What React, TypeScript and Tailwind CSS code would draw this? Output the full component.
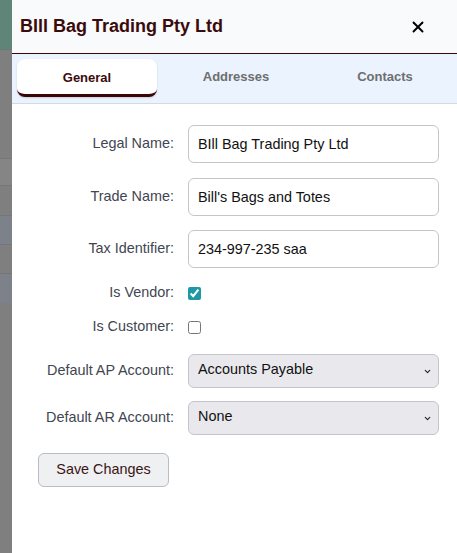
import { X, ChevronDown } from "lucide-react";

const font = { fontFamily: '"Liberation Sans", Arial, sans-serif' };

function Backdrop() {
  return (
    <div className="flex w-[12px] shrink-0 flex-col bg-[#7f7f7f]">
      <div className="h-[50px] border-b border-[#667a73] bg-[#5f8478]" />
      <div className="h-[109px] border-b border-[#767676]" />
      <div className="h-[27px] border-b border-[#767676] bg-[#858585]" />
      <div className="h-[30px] border-b border-[#767676]" />
      <div className="h-[29px] border-b border-[#767676] bg-[#7d818a]" />
      <div className="h-[29px] border-b border-[#767676]" />
      <div className="h-[29px] bg-[#7d818a]" />
    </div>
  );
}

const labelCls = "w-[176px] shrink-0 pr-[14px] text-right text-[14.4px] text-[#3f4651]";

function TextRow({ label, value, className }: { label: string; value: string; className?: string }) {
  return (
    <div className={`flex items-center ${className ?? ""}`}>
      <label className={labelCls}>{label}</label>
      <input
        defaultValue={value}
        className="h-[38px] w-[251px] rounded-[6px] border border-[#c2c6cc] bg-white px-[9px] text-[14.4px] text-[#111] outline-none"
      />
    </div>
  );
}

function CheckRow({ label, checked, className }: { label: string; checked: boolean; className?: string }) {
  return (
    <div className={`flex h-[20px] items-center ${className ?? ""}`}>
      <label className={labelCls}>{label}</label>
      <input
        type="checkbox"
        defaultChecked={checked}
        className="m-0 h-[13px] w-[13px] accent-[#1e97a6]"
      />
    </div>
  );
}

function SelectRow({ label, value, className }: { label: string; value: string; className?: string }) {
  return (
    <div className={`flex items-center ${className ?? ""}`}>
      <label className={labelCls}>{label}</label>
      <div className="relative w-[251px]">
        <select
          defaultValue={value}
          className="h-[34px] w-full appearance-none rounded-[6px] border border-[#c2c6cc] bg-[#e9e9ed] px-[9px] pb-[2px] text-[14.4px] text-[#111] outline-none"
        >
          <option>{value}</option>
        </select>
        <ChevronDown
          size={9}
          strokeWidth={3}
          className="pointer-events-none absolute right-[7px] top-[13px] text-[#222]"
        />
      </div>
    </div>
  );
}

export default function App() {
  const tabs = ["General", "Addresses", "Contacts"];
  const active = "General";

  return (
    <div className="flex h-[553px] w-[457px] overflow-hidden" style={font}>
      <Backdrop />
      <div className="flex flex-1 flex-col bg-white">
        <header className="flex h-[54px] shrink-0 items-center justify-between border-b border-[#3b0606] bg-[#f8fafc] pl-[8px] pr-[30px]">
          <h1 className="text-[18px] font-bold text-[#3b0b0b]">BIll Bag Trading Pty Ltd</h1>
          <X size={18} strokeWidth={2.5} className="text-black" />
        </header>

        <nav className="flex h-[50px] shrink-0 gap-[9px] border-b border-[#d3dae2] bg-[#eaf3fe] pl-[5px] pt-[5px]">
          {tabs.map((tab) => (
            <div
              key={tab}
              className={`flex h-[38px] w-[140px] items-center justify-center text-[13px] font-bold ${
                tab === active
                  ? "rounded-[8px] border-b-[3px] border-[#3b0505] bg-white pt-[2px] text-[#3b0b0b] shadow-[0_1px_2px_rgba(0,0,0,0.15)]"
                  : "pb-[2px] text-[#6e6e6e]"
              }`}
            >
              {tab}
            </div>
          ))}
        </nav>

        <form className="flex flex-col pt-[21px]">
          <TextRow label="Legal Name:" value="BIll Bag Trading Pty Ltd" />
          <TextRow label="Trade Name:" value="Bill's Bags and Totes" className="mt-[15px]" />
          <TextRow label="Tax Identifier:" value="234-997-235 saa" className="mt-[14px]" />
          <CheckRow label="Is Vendor:" checked className="mt-[15px]" />
          <CheckRow label="Is Customer:" checked={false} className="mt-[14px]" />
          <SelectRow label="Default AP Account:" value="Accounts Payable" className="mt-[17px]" />
          <SelectRow label="Default AR Account:" value="None" className="mt-[13px]" />
          <div className="mt-[18px] pl-[26px]">
            <button
              type="button"
              className="h-[34px] w-[131px] rounded-[6px] border border-[#b9bdc3] bg-[#eef0f2] text-[14.4px] text-[#3b1414]"
            >
              Save Changes
            </button>
          </div>
        </form>
      </div>
    </div>
  );
}
